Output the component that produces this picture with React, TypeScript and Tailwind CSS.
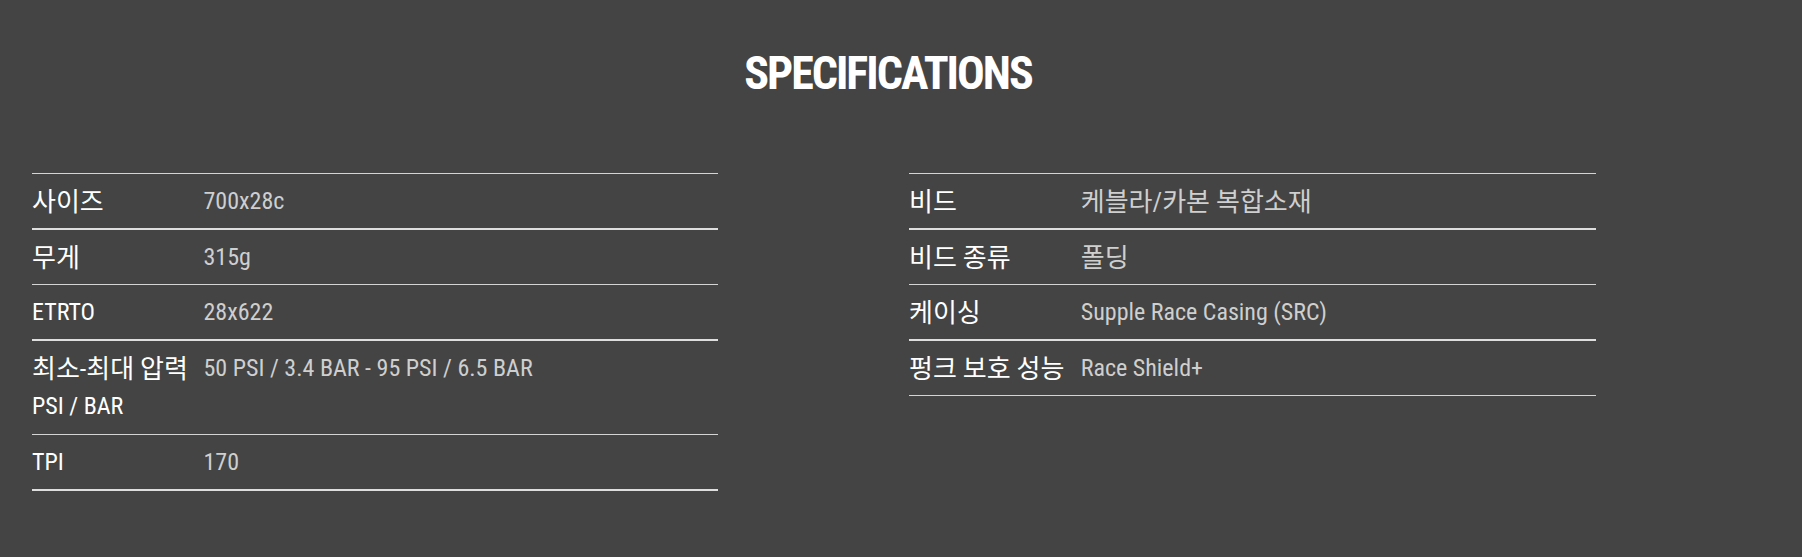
const left = [
    { label: ["사이즈"], value: "700x28c" },
    { label: ["무게"], value: "315g" },
    { label: ["ETRTO"], value: "28x622" },
    { label: ["최소-최대 압력", "PSI / BAR"], value: "50 PSI / 3.4 BAR - 95 PSI / 6.5 BAR" },
    { label: ["TPI"], value: "170" },
];

const right = [
    { label: ["비드"], value: "케블라/카본 복합소재" },
    { label: ["비드 종류"], value: "폴딩" },
    { label: ["케이싱"], value: "Supple Race Casing (SRC)" },
    { label: ["펑크 보호 성능"], value: "Race Shield+" },
];

type Row = { label: string[]; value: string };

// hangul falls back to the CJK face, which runs a bit small next to the latin one
function Txt({ text }: { text: string }) {
    const parts = text.split(/([\uac00-\ud7a3]+(?:[ \-\/][\uac00-\ud7a3]+)*)/);
    return (
        <>
            {parts.map((p, i) =>
                i % 2 === 1 ? <span key={i} className="align-[-2px] text-[26px] leading-none">{p}</span> : p
            )}
        </>
    );
}

function SpecTable({ rows, width }: { rows: Row[]; width: string }) {
    return (
        <div className={`${width} border-t border-[#d4d4d4]`}>
            {rows.map((row, i) => (
                <div
                    key={row.value}
                    className={`flex items-start leading-[38px] ${row.label.length > 1 ? "pt-[8px] pb-[9px]" : "py-[8px]"} ${i % 2 === 0 ? "border-b-2 border-[#dedede]" : "border-b border-[#d4d4d4]"}`}
                >
                    <div className="w-1/4 shrink-0 text-white">
                        {row.label.map((l) => <div key={l}><Txt text={l} /></div>)}
                    </div>
                    <div className="text-[#cfcfcf]"><Txt text={row.value} /></div>
                </div>
            ))}
        </div>
    );
}

export default function App() {
    return (
        <div className="min-h-[557px] w-full bg-[#444444] font-['Roboto_Condensed','Roboto','Noto_Sans_CJK_KR',sans-serif] text-[24px] font-stretch-condensed">
            <div className="w-[1776px] pt-[50px] text-center">
                <h2 className="text-[46px] font-bold leading-none tracking-[-2px] text-white">SPECIFICATIONS</h2>
            </div>
            <div className="mt-[77px] flex gap-[191px] pl-[32px]">
                <SpecTable rows={left} width="w-[686px]" />
                <SpecTable rows={right} width="w-[687px]" />
            </div>
        </div>
    );
}
